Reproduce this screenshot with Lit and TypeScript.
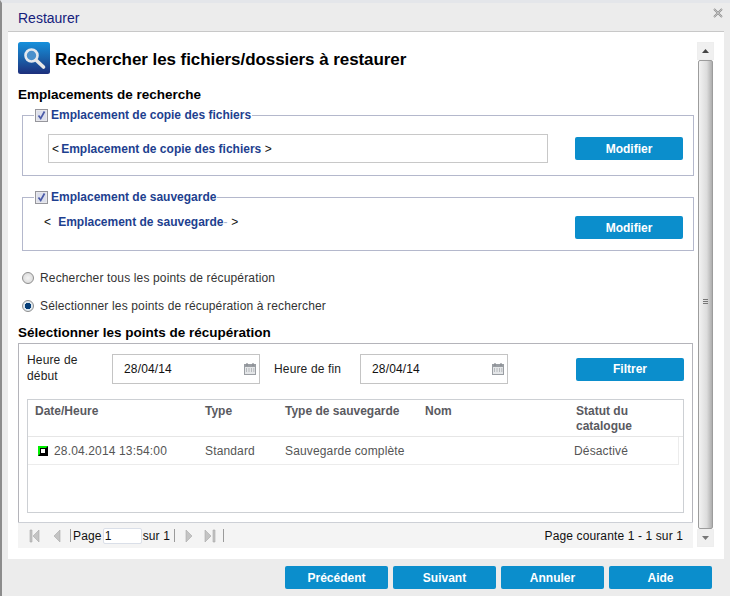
import { LitElement, html, css, svg } from "lit";
import { customElement } from "lit/decorators.js";

const calendar = html`<svg class="cal" width="12" height="12" viewBox="0 0 12 12"><rect x="0.5" y="1.5" width="11" height="10" fill="#e4e6e8" stroke="#9a9ea3"/><rect x="1" y="2" width="10" height="2" fill="#9a9ea3"/><path d="M3 0v3M9 0v3" stroke="#8a8e93" stroke-width="1.2"/><path d="M2 6h1M4.500 6h1M7 6h1M9.300 6h1M2 8h1M4.500 8h1M7 8h1M9.300 8h1" stroke="#8a8e93"/></svg>`;

const checkbox = html`<svg class="chk" width="13" height="13" viewBox="0 0 13 13"><rect x="0.5" y="0.5" width="12" height="12" fill="#e8e8ec" stroke="#96969c"/><rect x="2" y="2" width="9" height="9" fill="#dcdfeb"/><path d="M3.500 6.500l2.200 3 3.800-7" fill="none" stroke="#4a5aa8" stroke-width="1.700"/></svg>`;

const pagerIcon = (d: string) => svg`<path d=${d} fill="#c4c4c4" stroke="#a8a8a8" stroke-width="0.6"/>`;

@customElement("app-root")
export class AppRoot extends LitElement {
  static styles = css`
    :host { display: flex; flex-direction: column; width: 730px; height: 596px; background: #ececec; font-family: "Liberation Sans", Arial, sans-serif; font-size: 12px; letter-spacing: 0.15px; color: #333; overflow: hidden; box-sizing: border-box; border-top: 3px solid #e4e6ea; border-left: 2px solid #8c8c8c; }
    * { box-sizing: border-box; }
    .title { height: 28px; flex: none; display: flex; align-items: center; justify-content: space-between; padding: 2px 7px 0 16px; font-size: 14px; letter-spacing: 0; color: #15217c; }
    .close { align-self: flex-start; margin-top: 3px; }
    .panel { height: 528px; flex: none; margin: 0 6px; background: #fff; border-top: 1px solid #c8c8c8; display: flex; }
    .content { width: 690px; flex: none; padding: 10px 0 0 10px; }
    .heading { display: flex; align-items: center; gap: 5px; height: 32px; font-size: 17px; letter-spacing: -0.07px; font-weight: 700; color: #000; }
    .heading span { padding-top: 3px; }
    h2 { margin: 0; font-size: 13.5px; letter-spacing: 0; font-weight: 700; color: #000; line-height: 16px; }
    .h2a { margin-top: 13px; }
    fieldset { margin: 0 0 0 4px; padding: 0; width: 672px; border: 1px solid #b4b8cc; display: block; min-width: 0; }
    legend { padding: 0 1px; margin-left: 11px; display: flex; align-items: center; gap: 3px; color: #1e3f8f; font-weight: 700; letter-spacing: 0; line-height: 13px; height: 13px; }
    .chk { flex: none; }
    .fs1 { margin-top: 6px; height: 67px; }
    .fs2 { margin-top: 15px; height: 60px; }
    .fsrow { display: flex; align-items: flex-start; justify-content: space-between; }
    .fs1 .fsrow { padding: 12px 10px 0 25px; }
    .fs2 .fsrow { padding: 0 10px 0 21px; }
    .path { width: 500px; height: 29px; border: 1px solid #c8c8c8; display: flex; align-items: center; padding-left: 3px; color: #111; margin-right: 27px; white-space: pre; }
    .path b { color: #1e3f8f; letter-spacing: 0; margin-left: 2px; }
    .fs1 button { margin-top: 3px; }
    .fs2 .plain { display: flex; white-space: pre; color: #111; padding-top: 11px; }
    .fs2 .plain b { color: #1e3f8f; letter-spacing: 0; }
    .fs2 .plain i { font-style: normal; color: #a9b4cc; }
    .fs2 button { margin-top: 12px; }
    button { width: 108px; height: 23px; background: #0b8ecc; color: #fff; border: none; border-radius: 2px; font: 700 12px "Liberation Sans", Arial, sans-serif; letter-spacing: 0; padding: 0; flex: none; }
    .radio { display: flex; align-items: center; gap: 6px; margin-left: 4px; height: 16px; color: #333; }
    .r1 { margin-top: 19px; }
    .r2 { margin-top: 12px; }
    .rd { width: 12px; height: 12px; border-radius: 50%; border: 1px solid #8e8e8e; background: radial-gradient(circle at 50% 50%, #f4f4f4, #d4d4d4); display: block; flex: none; }
    .rd.on { background: radial-gradient(circle at 50% 50%, #063e78 0 3px, #dfe8ee 3.500px); }
    .h2b { margin-top: 11px; }
    .box { margin-top: 2px; width: 675px; height: 205px; border: 1px solid #b4b4ba; border-bottom: none; display: flex; flex-direction: column; }
    .filter { height: 55px; flex: none; display: flex; align-items: flex-start; padding: 10px 0 0 8px; color: #222; }
    .lbl { width: 85px; line-height: 16px; padding-right: 20px; margin-top: -2px; }
    .lbl2 { width: 86px; padding-right: 0; margin-left: 14px; margin-top: 7px; }
    .date { width: 148px; height: 30px; border: 1px solid #c4c4c4; display: flex; align-items: center; justify-content: space-between; padding: 0 3px 0 11px; color: #111; }
    .filter button { margin: 4px 0 0 68px; padding-bottom: 2px; }
    .table { margin-left: 8px; width: 657px; height: 114px; border: 1px solid #cdd0d4; flex: none; }
    .cols { display: grid; grid-template-columns: 170px 80px 140px 151px 108px; padding-left: 7px; }
    .thead { height: 37px; padding-top: 4px; font-weight: 700; letter-spacing: 0; color: #5a5a5f; line-height: 15px; border-bottom: 1px solid #e6e6e6; }
    .trow { height: 28px; width: 651px; align-items: center; color: #555; border-bottom: 1px solid #ececec; border-right: 1px solid #ececec; }
    .dt { display: flex; align-items: center; gap: 6px; margin-left: 3px; }
    .st { margin-left: -2px; }
    .pager { margin-top: auto; height: 26px; flex: none; width: 675px; margin-left: -1px; background: #f4f4f4; border-top: 1px solid #cdd0d6; display: flex; align-items: center; justify-content: space-between; padding: 0 10px 0 0; color: #111; }
    .pl { display: flex; align-items: center; padding-left: 10px; }
    .pl svg { flex: none; }
    .sep { width: 1px; height: 13px; background: #9a9a9a; flex: none; }
    .pg { width: 39px; height: 16px; background: #fff; border: 1px solid #dadfe8; border-radius: 2px; margin: 0 1px; padding-left: 1px; line-height: 14px; }
    .pr { letter-spacing: 0.12px; }
    .sb { width: 17px; margin-left: -1px; margin-top: 10px; height: 505px; flex: none; display: flex; flex-direction: column; }
    .arrow { height: 18px; background: #f0f0f0; display: flex; align-items: center; justify-content: center; flex: none; border: 1px solid #eee; }
    .thumb { flex: 1; margin: 0 1px; border: 1px solid #9c9c9c; border-radius: 2px; background: linear-gradient(90deg, #f2f2f2, #dcdcdc 60%, #aeaeae); display: flex; align-items: center; justify-content: center; }
    .grip { width: 5px; height: 5px; margin-top: 14px; border-top: 1px solid #777; border-bottom: 1px solid #777; }
    .grip::after { content: ""; display: block; margin-top: 1px; height: 1px; background: #777; }
    .footer { flex: none; display: flex; justify-content: flex-end; gap: 5px; padding: 7px 18px 0 0; }
    .footer button { width: 103px; }
  `;

  render() {
    const icon = html`<svg width="32" height="32" viewBox="0 0 32 32" style="flex:none"><defs><linearGradient id="g" x1="0" y1="0" x2="0" y2="1"><stop offset="0" stop-color="#1590dc"/><stop offset="0.5" stop-color="#1a63ac"/><stop offset="1" stop-color="#1d2f7c"/></linearGradient></defs><rect width="32" height="32" rx="2.500" fill="url(#g)"/><circle cx="13.500" cy="13.500" r="6" fill="#4a90cc" stroke="#e4e8ee" stroke-width="2.600"/><path d="M18.500 18.500l7 6.500" stroke="#e8e8e8" stroke-width="3.600" stroke-linecap="round"/></svg>`;
    return html`
      <div class="title"><span>Restaurer</span>
        <svg class="close" width="10" height="10" viewBox="0 0 10 10"><path d="M1 1l8 8M9 1l-8 8" stroke="#8f8f8f" stroke-width="1.800"/><path d="M1 1l8 8M9 1l-8 8" stroke="#ececec" stroke-width="0.500"/></svg>
      </div>
      <div class="panel">
        <div class="content">
          <div class="heading">${icon}<span>Rechercher les fichiers/dossiers à restaurer</span></div>
          <h2 class="h2a">Emplacements de recherche</h2>
          <fieldset class="fs1"><legend>${checkbox}<span>Emplacement de copie des fichiers</span></legend>
            <div class="fsrow"><div class="path">&lt;<b>Emplacement de copie des fichiers</b> &gt;</div><button>Modifier</button></div>
          </fieldset>
          <fieldset class="fs2"><legend>${checkbox}<span>Emplacement de sauvegarde</span></legend>
            <div class="fsrow"><div class="plain">&lt;  <b>Emplacement de sauvegarde</b> <i>-</i> &gt;</div><button>Modifier</button></div>
          </fieldset>
          <div class="radio r1"><span class="rd"></span><span>Rechercher tous les points de récupération</span></div>
          <div class="radio r2"><span class="rd on"></span><span>Sélectionner les points de récupération à rechercher</span></div>
          <h2 class="h2b">Sélectionner les points de récupération</h2>
          <div class="box">
            <div class="filter">
              <div class="lbl">Heure de début</div>
              <div class="date"><span>28/04/14</span>${calendar}</div>
              <div class="lbl lbl2">Heure de fin</div>
              <div class="date"><span>28/04/14</span>${calendar}</div>
              <button>Filtrer</button>
            </div>
            <div class="table">
              <div class="cols thead"><span>Date/Heure</span><span>Type</span><span>Type de sauvegarde</span><span>Nom</span><span>Statut du<br />catalogue</span></div>
              <div class="cols trow">
                <span class="dt"><svg width="10" height="10" viewBox="0 0 10 10"><rect width="10" height="10" fill="#000"/><path d="M0 0h10L8 2H2v6L0 10z" fill="#00f000"/><rect x="3" y="3" width="4" height="4" fill="#fff"/></svg>28.04.2014 13:54:00</span>
                <span>Standard</span><span>Sauvegarde complète</span><span></span><span class="st">Désactivé</span>
              </div>
            </div>
            <div class="pager">
              <div class="pl">
                <svg width="14" height="14" viewBox="0 0 14 14">${pagerIcon("M2 1h2v12H2zM11 1v12L5 7z")}</svg>
                <svg style="margin-left:8px" width="14" height="14" viewBox="0 0 14 14">${pagerIcon("M10 1v12L4 7z")}</svg>
                <span class="sep" style="margin-left:6px"></span>
                <span style="margin-left:2px">Page</span><span class="pg">1</span><span>sur 1</span>
                <span class="sep" style="margin-left:4px"></span>
                <svg style="margin-left:7px" width="14" height="14" viewBox="0 0 14 14">${pagerIcon("M4 1v12l6-6z")}</svg>
                <svg style="margin-left:7px" width="14" height="14" viewBox="0 0 14 14">${pagerIcon("M2 1v12l6-6zM10 1h2v12h-2z")}</svg>
                <span class="sep" style="margin-left:6px"></span>
              </div>
              <span class="pr">Page courante 1 - 1 sur 1</span>
            </div>
          </div>
        </div>
        <div class="sb">
          <div class="arrow"><svg width="7" height="4" viewBox="0 0 7 4"><path d="M3.500 0L7 4H0z" fill="#444"/></svg></div>
          <div class="thumb"><div class="grip"></div></div>
          <div class="arrow"><svg width="7" height="4" viewBox="0 0 7 4"><path d="M3.500 4L7 0H0z" fill="#777"/></svg></div>
        </div>
      </div>
      <div class="footer"><button>Précédent</button><button>Suivant</button><button>Annuler</button><button>Aide</button></div>
    `;
  }
}
